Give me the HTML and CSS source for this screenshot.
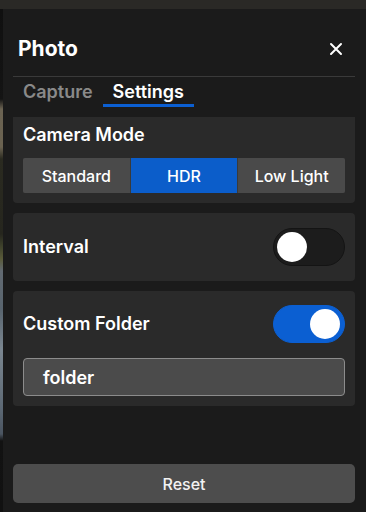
FILE: index.html
```html
<!DOCTYPE html>
<html>
<head>
<meta charset="utf-8">
<link rel="stylesheet" href="styles.css">
</head>
<body>
<div class="backdrop"></div>
<div class="panel">
  <div class="header">
    <h1 class="title">Photo</h1>
    <button class="close" aria-label="Close">
      <svg width="14" height="14" viewBox="0 0 14 14"><path d="M2 2L12 12M12 2L2 12" stroke="#fff" stroke-width="2" stroke-linecap="round"/></svg>
    </button>
  </div>
  <div class="tabs">
    <div class="tab">Capture</div>
    <div class="tab active">Settings</div>
  </div>
  <div class="content">
    <div class="card card-mode">
      <div class="label">Camera Mode</div>
      <div class="segmented">
        <div class="seg">Standard</div>
        <div class="seg active">HDR</div>
        <div class="seg">Low Light</div>
      </div>
    </div>
    <div class="card card-row">
      <div class="label">Interval</div>
      <div class="toggle"><div class="knob"></div></div>
    </div>
    <div class="card card-folder">
      <div class="row">
        <div class="label">Custom Folder</div>
        <div class="toggle on"><div class="knob"></div></div>
      </div>
      <div class="input">folder</div>
    </div>
  </div>
  <button class="reset">Reset</button>
</div>
</body>
</html>
```
FILE: styles.css
```css
* { box-sizing: border-box; }
html, body { margin: 0; padding: 0; }
body {
  width: 366px;
  height: 512px;
  overflow: hidden;
  display: flex;
  background: #2a2926;
  font-family: Inter, "Noto Sans", sans-serif;
  color: #fff;
}
.backdrop {
  width: 3px;
  margin-top: 9px;
  background: linear-gradient(to bottom, #101010 0px, #141414 90px, #6b6352 100px, #6a6250 138px, #2a2a20 150px, #26261e 225px, #3c3f2a 236px, #5a5b3a 250px, #626a72 262px, #58646e 300px, #7a8690 340px, #5c6874 400px, #4a5460 425px, #121212 432px, #111 503px);
}
.panel {
  flex: 1;
  margin-top: 9px;
  background: #1b1b1b;
  display: flex;
  flex-direction: column;
  padding: 0 11px 9px 10px;
}
.header {
  display: flex;
  align-items: center;
  justify-content: space-between;
  height: 68px;
  padding: 27px 12px 15px 5px;
  border-bottom: 1px solid #3a3a3a;
}
.title {
  margin: 0;
  font-size: 21px;
  font-weight: 700;
  line-height: 24px;
}
.close {
  background: none;
  border: 0;
  padding: 0;
  width: 14px;
  height: 14px;
  display: flex;
}
.tabs {
  display: flex;
  height: 30px;
}
.tab {
  padding: 3px 10px 0;
  font-size: 18px;
  font-weight: 600;
  line-height: 24px;
  color: #898989;
  border-bottom: 3px solid transparent;
}
.tab.active {
  color: #fff;
  border-bottom-color: #0b5fd2;
}
.content {
  flex: 1;
  display: flex;
  flex-direction: column;
  gap: 10px;
  padding-top: 10px;
}
.card {
  background: #2a2a2a;
  border-radius: 4px;
  padding: 0 10px;
}
.label {
  font-size: 18px;
  font-weight: 600;
  line-height: 24px;
}
.card-mode {
  padding-top: 6px;
  padding-bottom: 10px;
  border-top-left-radius: 0;
  border-top-right-radius: 0;
}
.card-mode .label { margin-bottom: 11px; }
.segmented {
  display: grid;
  grid-template-columns: 1fr 1fr 1fr;
  gap: 1px;
  background: #3a3a3a;
  border-radius: 2px;
  overflow: hidden;
  height: 35px;
}
.seg {
  background: #4a4a4a;
  display: flex;
  align-items: center;
  justify-content: center;
  font-size: 16px;
  font-weight: 500;
}
.seg.active { background: #0b5dca; }
.card-row {
  display: flex;
  align-items: center;
  justify-content: space-between;
  padding-top: 15px;
  padding-bottom: 15px;
}
.toggle {
  width: 72px;
  height: 38px;
  border-radius: 19px;
  background: #1c1c1c;
  border: 1px solid #141414;
  display: flex;
  align-items: center;
  padding: 0 3px;
}
.knob {
  width: 30px;
  height: 30px;
  border-radius: 50%;
  background: #fff;
}
.toggle.on {
  background: #0b5fd2;
  border-color: #0b5fd2;
  justify-content: flex-end;
  padding: 0 4px;
}
.card-folder {
  padding-top: 14px;
  padding-bottom: 10px;
}
.row {
  display: flex;
  align-items: center;
  justify-content: space-between;
  margin-bottom: 15px;
}
.input {
  height: 38px;
  background: #4b4b4b;
  border: 1.5px solid #8c8c8c;
  border-radius: 4px;
  padding: 0 19px;
  display: flex;
  align-items: center;
  font-size: 18px;
  font-weight: 600;
}
.reset {
  height: 39px;
  background: #4d4d4d;
  border: 0;
  border-radius: 5px;
  color: #f2f2f2;
  font-family: inherit;
  font-size: 16px;
  font-weight: 500;
}
```
